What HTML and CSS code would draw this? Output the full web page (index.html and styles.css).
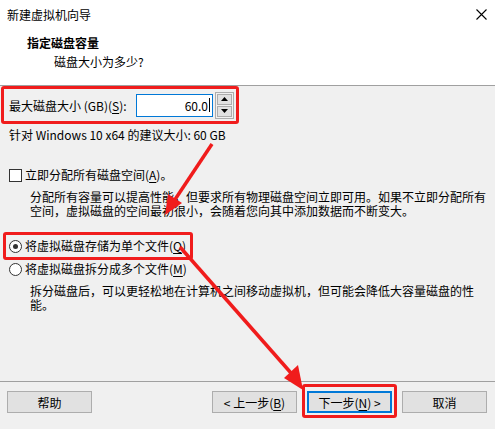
FILE: index.html
```html
<!DOCTYPE html>
<html lang="zh-CN">
<head>
  <meta charset="UTF-8" />
  <title>新建虚拟机向导</title>
  <link rel="stylesheet" href="styles.css">
</head>
<body>
  <div class="dialog">
    <header class="head">
      <div class="titlebar">
        <span class="title">新建虚拟机向导</span>
        <svg class="close" width="11" height="11" viewBox="0 0 11 11">
          <path d="M0.5 0.5 L10.5 10.5 M10.5 0.5 L0.5 10.5" stroke="#000" stroke-width="1.1" fill="none"/>
        </svg>
      </div>
      <div class="heading">指定磁盘容量</div>
      <div class="subheading">磁盘大小为多少?</div>
    </header>

    <main class="content">
      <div class="mark size-row">
        <span class="size-label">最大磁盘大小 (GB)(<u>S</u>):</span>
        <div class="num-box"><span class="num">60.0</span><span class="caret"></span></div>
        <div class="spin">
          <span class="spin-btn">
            <svg width="7" height="4" viewBox="0 0 7 4"><path d="M3.5 0 L7 4 L0 4 Z" fill="#000"/></svg>
          </span>
          <span class="spin-btn">
            <svg width="7" height="4" viewBox="0 0 7 4"><path d="M0 0 L7 0 L3.5 4 Z" fill="#000"/></svg>
          </span>
        </div>
      </div>
      <p class="hint">针对 Windows 10 x64 的建议大小: 60 GB</p>

      <div class="option check-row">
        <span class="checkbox"></span>
        <span>立即分配所有磁盘空间(<u>A</u>)。</span>
      </div>
      <p class="desc">分配所有容量可以提高性能，但要求所有物理磁盘空间立即可用。如果不立即分配所有空间，虚拟磁盘的空间最初很小，会随着您向其中添加数据而不断变大。</p>

      <div class="mark radio-mark">
        <div class="option">
          <span class="radio on"></span>
          <span>将虚拟磁盘存储为单个文件(<u>Q</u>)</span>
        </div>
      </div>
      <div class="option radio-row">
        <span class="radio"></span>
        <span>将虚拟磁盘拆分成多个文件(<u>M</u>)</span>
      </div>
      <p class="desc">拆分磁盘后，可以更轻松地在计算机之间移动虚拟机，但可能会降低大容量磁盘的性能。</p>
    </main>

    <footer class="foot">
      <button class="btn">帮助</button>
      <div class="nav">
        <button class="btn">&lt; 上一步(<u>B</u>)</button>
        <button class="btn primary">下一步(<u>N</u>) &gt;</button>
        <button class="btn">取消</button>
      </div>
    </footer>

    <svg class="arrows" width="495" height="429" viewBox="0 0 495 429">
      <line x1="212" y1="144" x2="174" y2="201" stroke="#f01c1c" stroke-width="3.5"/>
      <polygon points="165,215 168,194 182,203" fill="#f01c1c"/>
      <line x1="180" y1="247" x2="291" y2="373" stroke="#f01c1c" stroke-width="3.5"/>
      <polygon points="303,390 284,378 298,365" fill="#f01c1c"/>
    </svg>
  </div>
</body>
</html>
```

FILE: styles.css
```css
body {
  margin: 0;
  font-family: "Noto Sans CJK SC", "Noto Sans", sans-serif;
  font-size: 12px;
  color: #000;
  background: #f0f0f0;
}

.dialog {
  position: relative;
  width: 495px;
  height: 429px;
  display: flex;
  flex-direction: column;
  overflow: hidden;
}

.head {
  height: 85px;
  background: #fff;
  border-bottom: 1px solid #a0a0a0;
}

.titlebar {
  height: 28px;
  display: flex;
  align-items: center;
  justify-content: space-between;
  padding: 0 8px 0 7px;
}

.heading {
  font-weight: bold;
  margin: 7px 0 0 27px;
  line-height: 16px;
}

.subheading {
  margin: 3px 0 0 54px;
  line-height: 16px;
}

.content {
  flex: 1;
}

.mark {
  border: 3px solid #f01c1c;
  border-radius: 3px;
}

.size-row {
  width: 227px;
  height: 32px;
  margin-left: 1px;
  display: flex;
  align-items: center;
  padding-left: 5px;
}

.size-label {
  width: 127px;
  flex: none;
}

u {
  text-decoration: underline;
  text-underline-offset: 2px;
}

.num-box {
  width: 73px;
  height: 21px;
  border: 1px solid #0078d7;
  background: #fff;
  display: flex;
  align-items: center;
  justify-content: flex-end;
  padding-right: 2px;
}

.caret {
  width: 1px;
  height: 14px;
  background: #000;
  margin-left: 1px;
}

.spin {
  margin-left: 2px;
  border: 1px solid #adadad;
  display: flex;
  flex-direction: column;
  gap: 1px;
  padding: 1px;
  background: #f0f0f0;
}

.spin-btn {
  width: 13px;
  height: 9px;
  border: 1px solid #adadad;
  background: #e1e1e1;
  display: flex;
  align-items: center;
  justify-content: center;
}

.hint {
  margin: 4px 0 0 9px;
  line-height: 14px;
}

.option {
  display: flex;
  align-items: center;
  gap: 3px;
  line-height: 14px;
  margin-left: 9px;
}

.check-row {
  margin-top: 26px;
}

.checkbox {
  width: 11px;
  height: 11px;
  border: 1px solid #333;
  background: #fff;
}

.desc {
  margin: 8px 3px 0 30px;
  line-height: 14px;
}

.radio-mark {
  display: inline-block;
  margin: 14px 0 0 3px;
  padding: 4px 4px 4px 0;
}

.radio-mark .option {
  margin-left: 3px;
}

.radio {
  width: 11px;
  height: 11px;
  border: 1px solid #333;
  border-radius: 50%;
  background: #fff;
  position: relative;
}

.radio.on::after {
  content: "";
  position: absolute;
  left: 3px;
  top: 3px;
  width: 5px;
  height: 5px;
  border-radius: 50%;
  background: #333;
}

.radio-row {
  margin-top: 2px;
}

.foot {
  height: 38px;
  border-top: 1px solid #a0a0a0;
  display: flex;
  justify-content: space-between;
  align-items: flex-start;
  padding: 9px 8px 0 7px;
}

.nav {
  display: flex;
  gap: 10px;
}

.btn {
  width: 85px;
  height: 22px;
  font: inherit;
  border: 1px solid #adadad;
  background: #e1e1e1;
  padding: 0;
  color: #000;
}

.btn.primary {
  border: 2px solid #0078d7;
  position: relative;
}

.btn.primary::after {
  content: "";
  position: absolute;
  top: -9px;
  bottom: -7px;
  left: -7px;
  right: -7px;
  border: 3px solid #f01c1c;
  border-radius: 3px;
}

.arrows {
  position: absolute;
  left: 0;
  top: 0;
  pointer-events: none;
}
```
